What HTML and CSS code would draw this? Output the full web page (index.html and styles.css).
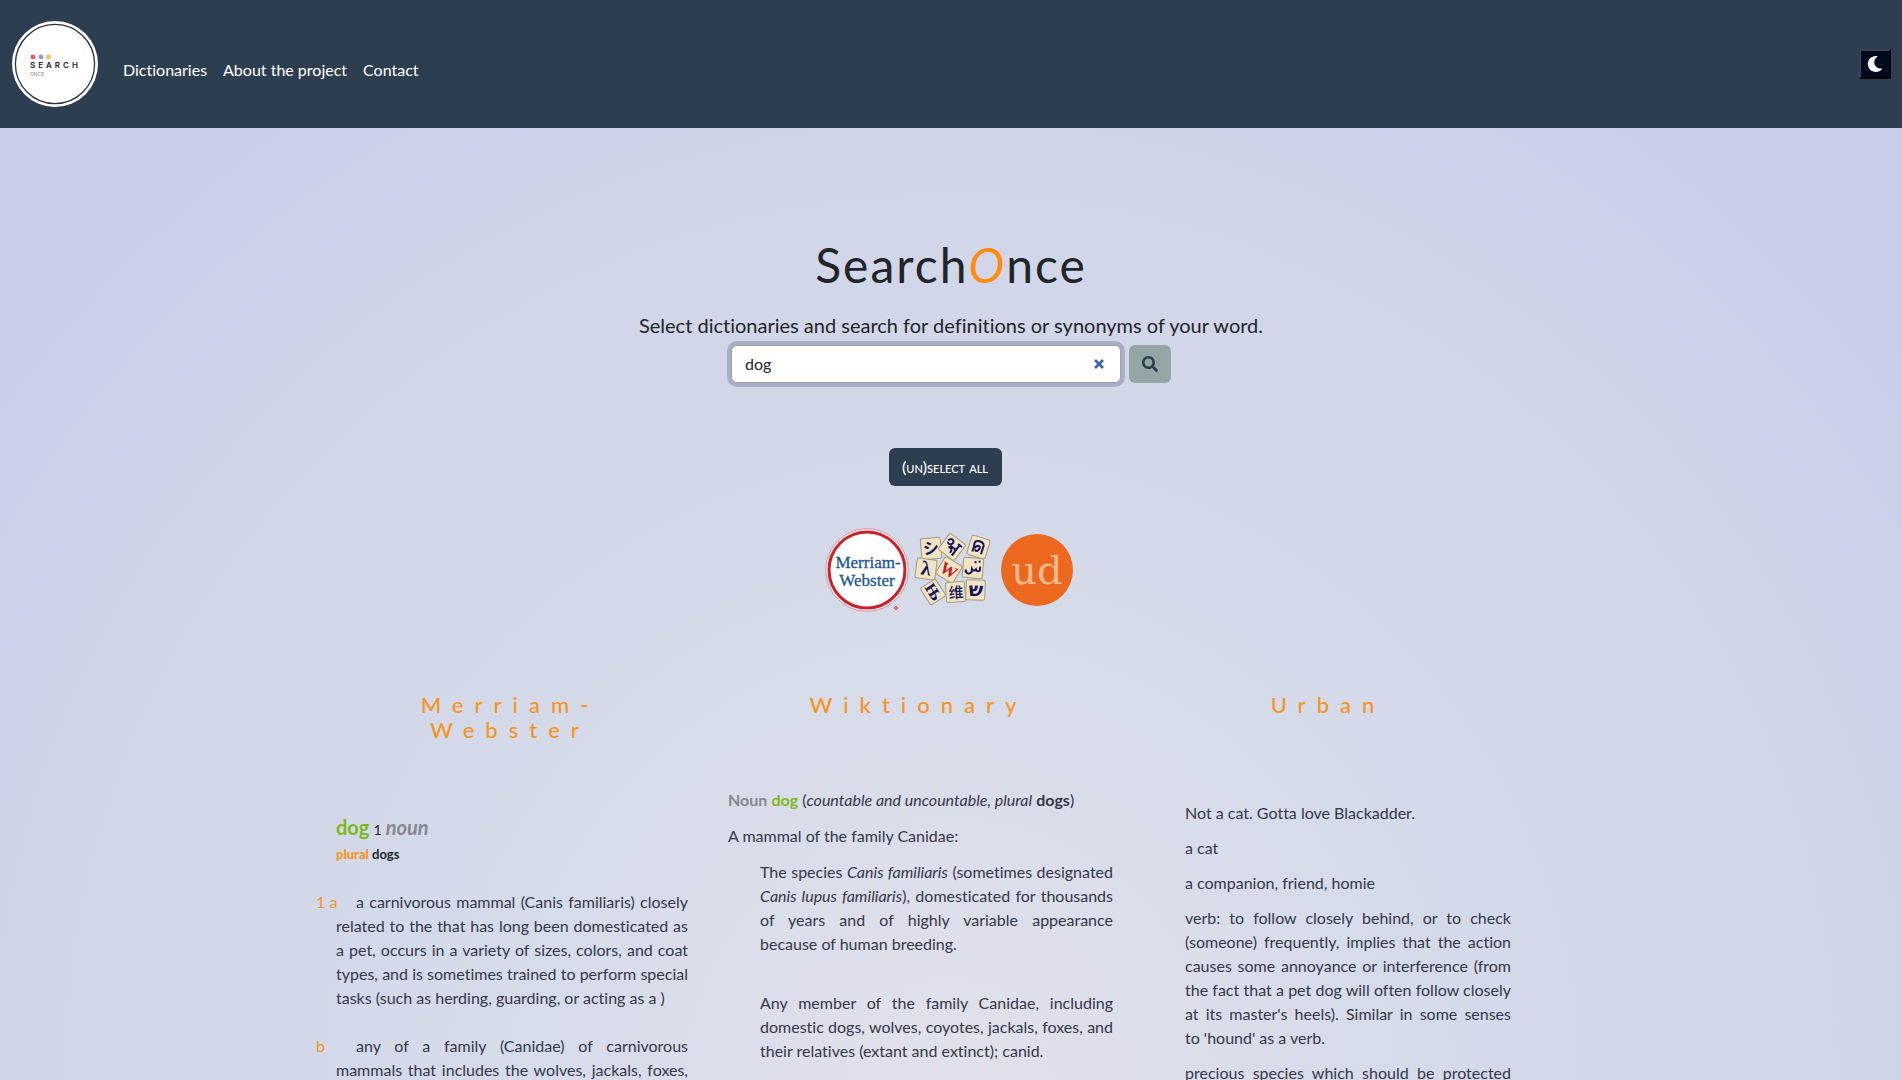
FILE: index.html
```html
<!DOCTYPE html>
<html lang="en">
<head>
  <meta charset="utf-8">
  <title>SearchOnce</title>
  <link rel="stylesheet" href="styles.css">
</head>
<body>
  <header class="navbar">
    <a class="brand" href="#" aria-label="SearchOnce home">
      <svg width="86" height="86" viewBox="0 0 86 86">
        <circle cx="43" cy="43" r="43" fill="#fff"/>
        <circle cx="43" cy="43" r="39.6" fill="none" stroke="#2c3138" stroke-width="1.3"/>
        <circle cx="21" cy="36" r="2.4" fill="#ee5564"/>
        <circle cx="29" cy="36" r="2.4" fill="#9a98b0"/>
        <circle cx="36.500" cy="36" r="2.4" fill="#f8bd55"/>
        <text class="logo-main" x="18" y="47">SEARCH</text>
        <text class="logo-sub" x="18" y="54.500">ONCE</text>
      </svg>
    </a>
    <nav class="links">
      <a href="#">Dictionaries</a>
      <a href="#">About the project</a>
      <a href="#">Contact</a>
    </nav>
    <button class="theme" type="button" aria-label="Dark mode">
      <svg width="16" height="16" viewBox="0 0 512 512"><path fill="#fff" d="M283.211 512c78.962 0 151.079-35.925 198.857-94.792 7.068-8.708-.639-21.430-11.562-19.350-124.203 23.654-238.262-71.576-238.262-196.954 0-72.222 38.662-138.635 101.498-174.394 9.686-5.512 7.250-20.197-3.756-22.230A258.156 258.156 0 0 0 283.211 0c-141.309 0-256 114.511-256 256 0 141.309 114.511 256 256 256z"/></svg>
    </button>
  </header>

  <main class="page">
    <section class="hero">
      <h1>Search<em>O</em>nce</h1>
      <label class="tagline" for="word">Select dictionaries and search for definitions or synonyms of your word.</label>
      <form class="search">
        <div class="field">
          <input id="word" type="text" value="dog">
          <button class="clear" type="button" aria-label="Clear">
            <svg width="12" height="12" viewBox="0 0 12 12"><path d="M2 2l8 8M10 2l-8 8" stroke="#3d62a8" stroke-width="2.600"/></svg>
          </button>
        </div>
        <button class="go" type="submit" aria-label="Search">
          <svg width="16" height="16" viewBox="0 0 512 512"><path fill="#2c3e50" d="M505 442.700L405.300 343c-4.500-4.500-10.600-7-17-7H372c27.600-35.300 44-79.700 44-128C416 93.100 322.900 0 208 0S0 93.100 0 208s93.100 208 208 208c48.300 0 92.700-16.400 128-44v16.300c0 6.400 2.500 12.500 7 17l99.700 99.700c9.400 9.400 24.600 9.400 33.900 0l28.300-28.300c9.400-9.400 9.400-24.600.1-34zM208 336c-70.700 0-128-57.200-128-128 0-70.700 57.200-128 128-128 70.700 0 128 57.200 128 128 0 70.700-57.200 128-128 128z"/></svg>
        </button>
      </form>
      <button class="toggle-all" type="button">(un)select all</button>
      <div class="sources">
        <button type="button" aria-label="Merriam-Webster">
          <svg width="84" height="84" viewBox="0 0 84 84">
            <circle cx="42" cy="42" r="41.300" fill="#fff" stroke="#e08a98" stroke-width="1"/>
            <circle cx="42" cy="42" r="38" fill="#fff" stroke="#cf2029" stroke-width="3"/>
            <text class="mw" x="43" y="40">Merriam-</text>
            <text class="mw" x="42" y="58">Webster</text>
            <circle cx="71" cy="80" r="1.500" fill="#e9a0ae" stroke="#d4405a"/>
          </svg>
        </button>
        <button type="button" aria-label="Wiktionary">
          <svg class="tiles" width="76" height="72" viewBox="0 0 76 72">
            <g class="tile">
              <g transform="translate(14 14) rotate(-5)"><rect x="-10" y="-10" width="20" height="21" rx="2"/><text class="cjk" y="6">シ</text></g>
              <g transform="translate(35 13) rotate(37)"><rect x="-10" y="-10" width="20" height="20" rx="2"/><path d="M-7-3q1-4 4-3 3 2 0 5-3 1-3-1M-3 2q5-2 5 4M-2 0h6M3-6h5M5-6v13"/></g>
              <g transform="translate(61 13) rotate(17)"><rect x="-9" y="-10" width="19" height="20" rx="2"/><path d="M-4 6v-6q-2-6 4-6 6 0 5 6v6M-3 2q2-4 4-3t0 4-3 0"/></g>
              <g transform="translate(9 35) rotate(8)"><rect x="-10" y="-10" width="20" height="20" rx="2"/><text class="greek" y="6">λ</text></g>
              <g transform="translate(32 36) rotate(31)"><rect x="-10" y="-10" width="20" height="20" rx="2"/><text class="red" y="6">W</text></g>
              <g transform="translate(56 34) rotate(5)"><rect x="-10" y="-10" width="20" height="20" rx="2"/><path d="M7-2v4q-3 2-4-1-2 3-4 0v3q-3 4-6 0V2M1-6h2M5-7h2"/></g>
              <g transform="translate(16 58) rotate(-33)"><rect x="-9" y="-10" width="18" height="20" rx="2"/><g transform="rotate(90)"><text class="cyrillic" y="5">Њ</text></g></g>
              <g transform="translate(39 58) rotate(-4)"><rect x="-10" y="-10" width="19" height="20" rx="2"/><text class="cjk small" y="6">维</text></g>
              <g transform="translate(59 56) rotate(2)"><rect x="-10" y="-10" width="19" height="20" rx="2"/><text class="hebrew" y="6">ש</text></g>
            </g>
          </svg>
        </button>
        <button type="button" aria-label="Urban Dictionary">
          <svg width="72" height="72" viewBox="0 0 72 72">
            <circle cx="36" cy="36" r="36" fill="#ec681f"/>
            <text class="ud" x="36" y="50">ud</text>
          </svg>
        </button>
      </div>
    </section>

    <section class="results">
      <article class="merriam">
        <h2>Merriam-Webster</h2>
        <p class="entry"><b class="word">dog</b> <span>1</span> <i>noun</i></p>
        <p class="forms"><b>plural</b> dogs</p>
        <ol>
          <li><span class="mark">1 a</span>a carnivorous mammal (Canis familiaris) closely related to the that has long been domesticated as a pet, occurs in a variety of sizes, colors, and coat types, and is sometimes trained to perform special tasks (such as herding, guarding, or acting as a )</li>
          <li><span class="mark">b</span>any of a family (Canidae) of carnivorous mammals that includes the wolves, jackals, foxes, coyotes, and the domestic dog</li>
        </ol>
      </article>
      <article class="wiktionary">
        <h2>Wiktionary</h2>
        <p><b class="kind">Noun</b> <b class="word">dog</b> (<i>countable and uncountable, plural</i> <b>dogs</b>)</p>
        <p>A mammal of the family Canidae:</p>
        <ul>
          <li>The species <i>Canis familiaris</i> (sometimes designated <i>Canis lupus familiaris</i>), domesticated for thousands of years and of highly variable appearance because of human breeding.</li>
          <li>Any member of the family Canidae, including domestic dogs, wolves, coyotes, jackals, foxes, and their relatives (extant and extinct); canid.</li>
        </ul>
      </article>
      <article class="urban">
        <h2>Urban</h2>
        <ul>
          <li>Not a cat. Gotta love Blackadder.</li>
          <li>a cat</li>
          <li>a companion, friend, homie</li>
          <li>verb: to follow closely behind, or to check (someone) frequently, implies that the action causes some annoyance or interference (from the fact that a pet dog will often follow closely at its master's heels). Similar in some senses to&nbsp;'hound' as a verb.</li>
          <li>precious species which should be protected at&nbsp;all costs</li>
        </ul>
      </article>
    </section>
  </main>
</body>
</html>
```
FILE: styles.css
```css
* {
  box-sizing: border-box;
}

body {
  margin: 0;
  height: 100vh;
  display: flex;
  flex-direction: column;
  background: radial-gradient(circle at 50% 100%, #e0e1ec 0, #d7dcea 400px, #d0d5e8 900px, #cacdea 1200px, #cacdea 100%);
  color: #212529;
  font: 16px/24px Lato, sans-serif;
  font-variant-ligatures: none;
}

h1, h2, p, ul, ol {
  margin: 0;
  padding: 0;
  font-weight: 400;
}

ul, ol {
  list-style: none;
}

button {
  padding: 0;
  border: 0;
  background: none;
  font: inherit;
  cursor: pointer;
}

svg {
  display: block;
}

.navbar {
  display: flex;
  align-items: center;
  flex: none;
  height: 128px;
  padding: 0 11px 0 12px;
  background: #2c3e50;
}

.links {
  display: flex;
  gap: 16px;
  padding: 12px 0 0 25px;
}

.links a {
  color: #fff;
  text-decoration: none;
}

.logo-main {
  font: 600 8px Inter, sans-serif;
  letter-spacing: 3px;
  fill: #222;
}

.logo-sub {
  font: 5px Inter, sans-serif;
  fill: #888;
}

.theme {
  display: grid;
  place-items: center;
  width: 32px;
  height: 30px;
  margin-left: auto;
  border: 2px solid;
  border-color: #3a4350 #04070e #04070e #3a4350;
  background: #030a1c;
}

.page {
  flex: 1;
  min-height: 0;
  overflow-y: auto;
  scrollbar-width: none;
}

.hero {
  display: flex;
  flex-direction: column;
  align-items: center;
  padding-top: 107px;
}

h1 {
  font-size: 48px;
  line-height: 60px;
  letter-spacing: 2px;
}

h1 em {
  color: #ff8c0f;
}

.tagline {
  margin-top: 15px;
  font-size: 20px;
  line-height: 30px;
}

.search {
  display: flex;
  gap: 8px;
  margin-top: 5px;
}

.field {
  position: relative;
}

.field input {
  display: block;
  width: 390px;
  height: 38px;
  padding: 0 12px 2px 13px;
  border: 1px solid #969fb2;
  border-radius: 6px;
  outline: 0;
  box-shadow: 0 0 0 4px #abafc3;
  background: #fff;
  color: #212529;
  font: inherit;
}

.clear {
  position: absolute;
  top: 13px;
  right: 16px;
}

.go {
  display: grid;
  place-items: center;
  width: 42px;
  height: 38px;
  border-radius: 6px;
  background: #95a5a6;
}

.toggle-all {
  width: 113px;
  height: 38px;
  margin: 65px 12px 0 0;
  border-radius: 6px;
  background: #2c3e50;
  color: #fff;
  font-weight: 500;
  font-variant-caps: small-caps;
}

.sources {
  display: flex;
  align-items: center;
  gap: 8px;
  margin: 42px 4px 0 0;
}

.mw {
  font: 17px "Liberation Serif", serif;
  text-anchor: middle;
  fill: #1a5496;
  stroke: #1a5496;
  stroke-width: 0.3;
}

.ud {
  font: 40px "DejaVu Serif", serif;
  text-anchor: middle;
  fill: #f9b98c;
}

.tiles {
  overflow: visible;
}

.tile rect {
  fill: #f1e4c4;
  stroke: #a49a80;
}

.tile path {
  fill: none;
  stroke: #17145c;
  stroke-width: 2;
}

.tile text {
  text-anchor: middle;
  font: 700 17px "DejaVu Serif", serif;
  fill: #17145c;
}

.tile .greek {
  font: 700 20px "Liberation Serif", serif;
}

.tile .cjk {
  font: 700 16px "Noto Sans CJK JP", sans-serif;
}

.tile .small {
  font: 500 15px "Noto Sans CJK SC", sans-serif;
}

.tile .hebrew {
  font: 700 19px "DejaVu Sans", sans-serif;
}

.tile .cyrillic {
  font-size: 14px;
}

.tile .red {
  fill: #c22026;
  font: 700 17px "Liberation Serif", serif;
}

.results {
  display: grid;
  grid-template-columns: 348fr 381fr 350fr;
  gap: 44px;
  max-width: 1230px;
  margin: 80px auto 0;
  padding: 0 63px 40px 0;
  color: #343848;
  text-align: justify;
}

h2 {
  padding: 0 80px;
  color: #f7941d;
  font-size: 22px;
  font-weight: 500;
  line-height: 25px;
  letter-spacing: 11px;
  text-align: center;
}

.word {
  color: #7db81a;
}

.entry {
  margin-top: 73px;
  color: #212529;
}

.entry b,
.entry i {
  font-size: 20px;
  font-weight: 700;
}

.entry i,
.kind {
  color: #85888f;
}

.entry span {
  font-size: 14px;
}

.forms {
  color: #212529;
  font-size: 13px;
  font-weight: 700;
}

.forms b {
  color: #f7941d;
}

.merriam ol {
  margin-top: 24px;
}

.merriam ol,
.wiktionary ul {
  margin-right: -4px;
}

.merriam li {
  margin-bottom: 24px;
  text-indent: 20px;
}

.mark {
  float: left;
  margin-left: -20px;
  width: 20px;
  color: #f7941d;
  text-indent: 0;
  white-space: nowrap;
}

.wiktionary h2,
.urban h2 {
  padding: 0 40px;
}

.wiktionary p {
  margin-bottom: 12px;
}

.wiktionary h2 {
  margin-bottom: 71px;
}

.wiktionary ul {
  padding-left: 32px;
}

.wiktionary li {
  margin-bottom: 35px;
}

.urban h2 {
  margin-bottom: 84px;
}

.urban ul {
  margin-right: -8px;
  padding-left: 32px;
}

.urban li {
  margin-bottom: 11px;
}
```
